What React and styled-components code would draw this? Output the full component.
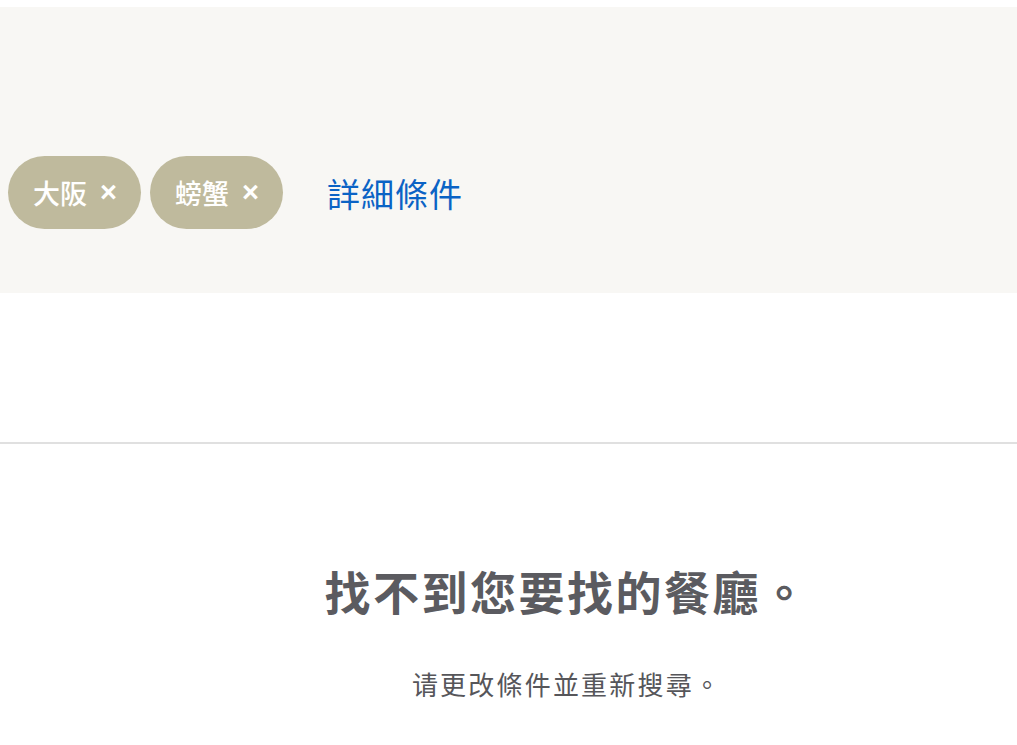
import styled, { createGlobalStyle } from 'styled-components'

const GlobalStyle = createGlobalStyle`
  body {
    margin: 0;
    background: #fff;
    font-family: 'Noto Sans CJK TC', 'Noto Sans', sans-serif;
  }
`

const tags = ['大阪', '螃蟹']

export default function App() {
  return (
    <Page>
      <GlobalStyle />
      <FilterPanel>
        <FilterRow>
          <ChipRow>
            {tags.map((tag) => (
              <Chip key={tag}>
                <ChipLabel>{tag}</ChipLabel>
                <ChipClose aria-label="remove">×</ChipClose>
              </Chip>
            ))}
          </ChipRow>
          <MoreLink href="#">詳細條件</MoreLink>
        </FilterRow>
      </FilterPanel>
      <Divider />
      <EmptyState>
        <EmptyTitle>找不到您要找的餐廳。</EmptyTitle>
        <EmptyHint>请更改條件並重新搜尋。</EmptyHint>
      </EmptyState>
    </Page>
  )
}

const Page = styled.div`
  width: 100%;
  min-height: 745px;
`

const FilterPanel = styled.section`
  margin-top: 7px;
  height: 286px;
  box-sizing: border-box;
  padding: 149px 8px 0;
  background: #f8f7f4;
`

const FilterRow = styled.div`
  display: flex;
  align-items: center;
`

const ChipRow = styled.div`
  display: flex;
  gap: 9px;
`

const Chip = styled.button`
  display: inline-flex;
  align-items: center;
  gap: 13px;
  height: 73px;
  padding: 0 24px 0 25px;
  border: none;
  border-radius: 37px;
  background: #bfba9d;
  color: #fff;
  font-family: inherit;
  cursor: pointer;
`

const ChipLabel = styled.span`
  font-size: 27px;
  font-weight: 500;
`

const ChipClose = styled.span`
  font-family: 'Liberation Sans', sans-serif;
  font-size: 29px;
  font-weight: 700;
  line-height: 1;
`

const MoreLink = styled.a`
  margin-left: 44px;
  font-size: 33px;
  letter-spacing: 1px;
  color: #0b63c5;
  text-decoration: none;
`

const Divider = styled.hr`
  margin: 149px 0 0;
  border: none;
  height: 2px;
  background: #e0e0e0;
`

const EmptyState = styled.div`
  padding: 115px 0 0 117px;
  text-align: center;
`

const EmptyTitle = styled.h2`
  margin: 0;
  font-size: 46px;
  line-height: 62px;
  font-weight: 700;
  letter-spacing: 2.5px;
  color: #5b5b60;
`

const EmptyHint = styled.p`
  margin: 45px 0 0;
  font-size: 26px;
  line-height: 36px;
  letter-spacing: 2.2px;
  color: #56565a;
`
